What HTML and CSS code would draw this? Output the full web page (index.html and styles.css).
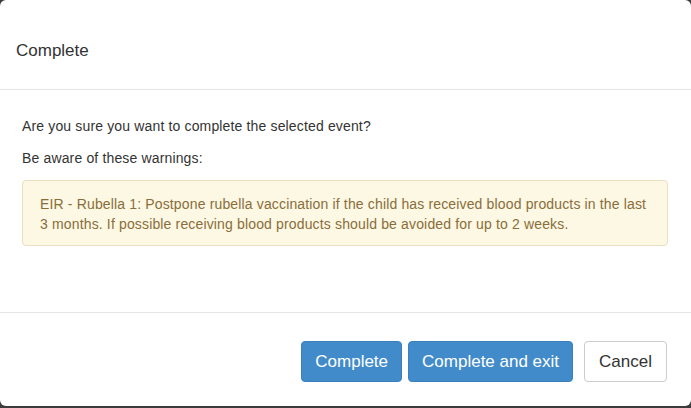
FILE: index.html
```html
<!DOCTYPE html>
<html>
<head>
<meta charset="utf-8">
<link rel="stylesheet" href="styles.css">
</head>
<body>
<div class="modal">
  <div class="modal-header">Complete</div>
  <div class="modal-body">
    <p class="msg">Are you sure you want to complete the selected event?</p>
    <p class="msg msg-last">Be aware of these warnings:</p>
    <div class="alert">EIR - Rubella 1: Postpone rubella vaccination if the child has received blood products in the last 3 months. If possible receiving blood products should be avoided for up to 2 weeks.</div>
  </div>
  <div class="modal-footer">
    <button class="btn btn-primary">Complete</button>
    <button class="btn btn-primary">Complete and exit</button>
    <button class="btn btn-default">Cancel</button>
  </div>
</div>
</body>
</html>
```
FILE: styles.css
```css
html, body {
  margin: 0;
  padding: 0;
}
body {
  background: #3c3c3c;
  font-family: "Liberation Sans", Arial, sans-serif;
  color: #333;
  width: 691px;
  height: 408px;
  overflow: hidden;
}
.modal {
  height: 406px;
  background: #fff;
  border-radius: 6px;
  display: flex;
  flex-direction: column;
}
.modal-header {
  height: 90px;
  box-sizing: border-box;
  border-bottom: 1px solid #e5e5e5;
  display: flex;
  align-items: center;
  padding: 12px 16px 0;
  font-size: 17px;
  color: #333;
}
.modal-body {
  flex: 1;
  padding: 27px 23px 0 22px;
}
.msg {
  margin: 0 0 14px;
  font-size: 14px;
  letter-spacing: 0.15px;
  line-height: 18px;
}
.msg-last {
  margin-bottom: 13px;
}
.alert {
  background: #fcf8e3;
  border: 1px solid #ecdfc0;
  border-radius: 4px;
  color: #8a6d3b;
  font-size: 14px;
  letter-spacing: 0.15px;
  line-height: 20px;
  padding: 13px 13px 11px 17px;
}
.modal-footer {
  border-top: 1px solid #e5e5e5;
  height: 94px;
  box-sizing: border-box;
  display: flex;
  justify-content: flex-end;
  align-items: flex-start;
  padding: 28px 24px 0 0;
}
.btn {
  font-family: "Liberation Sans", Arial, sans-serif;
  font-size: 17px;
  height: 41px;
  padding: 0 14px;
  border-radius: 4px;
  border: 1px solid transparent;
  cursor: pointer;
}
.btn-primary {
  background: #428bca;
  border-color: #3a80bd;
  color: #fff;
  padding: 0 13px;
  margin-left: 6px;
}
.btn-default {
  background: #fff;
  border-color: #ccc;
  color: #333;
  margin-left: 11px;
}
```
